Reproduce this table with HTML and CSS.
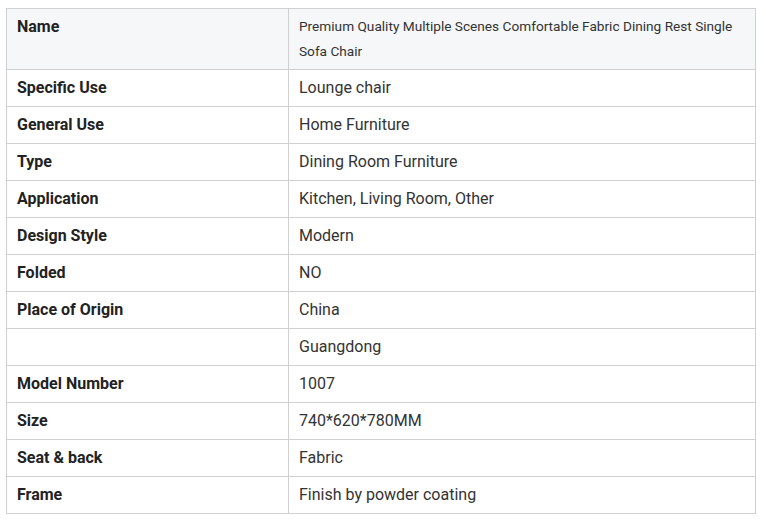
FILE: index.html
```html
<!DOCTYPE html>
<html>
<head>
<meta charset="utf-8">
<link rel="stylesheet" href="styles.css">
</head>
<body>
<table class="spec">
  <tr class="head">
    <th>Name</th>
    <td class="small">Premium Quality Multiple Scenes Comfortable Fabric Dining Rest Single Sofa Chair</td>
  </tr>
  <tr><th>Specific Use</th><td>Lounge chair</td></tr>
  <tr><th>General Use</th><td>Home Furniture</td></tr>
  <tr><th>Type</th><td>Dining Room Furniture</td></tr>
  <tr><th>Application</th><td>Kitchen, Living Room, Other</td></tr>
  <tr><th>Design Style</th><td>Modern</td></tr>
  <tr><th>Folded</th><td>NO</td></tr>
  <tr><th>Place of Origin</th><td>China</td></tr>
  <tr><th></th><td>Guangdong</td></tr>
  <tr><th>Model Number</th><td>1007</td></tr>
  <tr><th>Size</th><td>740*620*780MM</td></tr>
  <tr><th>Seat &amp; back</th><td>Fabric</td></tr>
  <tr><th>Frame</th><td>Finish by powder coating</td></tr>
</table>
</body>
</html>
```
FILE: styles.css
```css
html, body {
  background: #fff;
}
body {
  margin: 8px 0 0 6px;
  font-family: Roboto, "Liberation Sans", sans-serif;
  color: #333;
}
.spec {
  border-collapse: collapse;
  width: 750px;
  table-layout: fixed;
}
.spec th, .spec td {
  border: 1px solid #d0d0d0;
  padding: 6px 10px;
  line-height: 24px;
  font-size: 16px;
  text-align: left;
  vertical-align: top;
  height: 24px;
}
.spec th {
  width: 261px;
  font-weight: 700;
  color: #222;
}
.spec td {
  color: #333;
}
.spec .head th, .spec .head td {
  background: #f6f7f9;
}
.spec td.small {
  font-size: 13.65px;
  line-height: 25px;
  padding: 5px 10px 5px 10px;
}
```
